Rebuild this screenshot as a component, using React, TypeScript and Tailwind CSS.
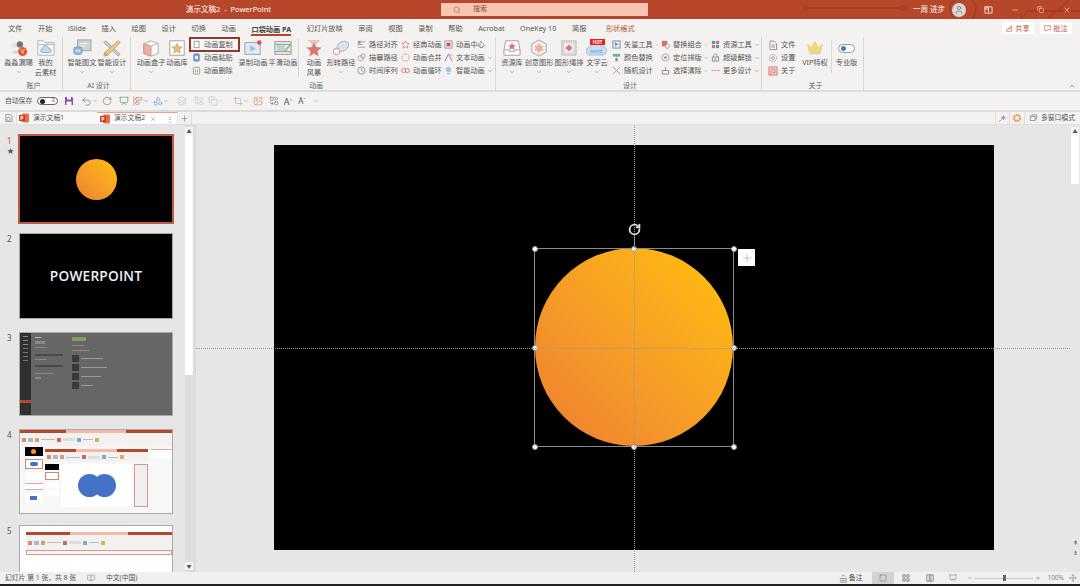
import React from 'react'
import { ChevronDown, ChevronUp, Undo2, RotateCw, Presentation, AlignStartVertical, Copy, Crop, Minus, Plus, X, Search, User, Square, Move, Layers, Combine, Shapes, ImagePlus, BookOpen } from 'lucide-react'

const tabs = ['文件', '开始', 'iSlide', '插入', '绘图', '设计', '切换', '动画']
const tabs2 = ['审阅', '视图', '录制', '帮助', 'Acrobat', 'OneKey 10', '简报']

function Ic({ children, w = 9, h = 9, vb = '0 0 10 10' }: { children: React.ReactNode; w?: number; h?: number; vb?: string }) {
  return (
    <svg width={w} height={h} viewBox={vb} fill="none" className="shrink-0 opacity-85">
      {children}
    </svg>
  )
}

function BigIcon({ children }: { children: React.ReactNode }) {
  return (
    <svg width="20" height="18" viewBox="0 0 22 20" fill="none" className="shrink-0 opacity-80">
      {children}
    </svg>
  )
}

function Big({ w, icon, label, line2, chev }: { w: string; icon: React.ReactNode; label: string; line2?: string; chev?: boolean }) {
  return (
    <div className={`${w} flex flex-col items-center pt-[2px] shrink-0`}>
      <div className="h-[18px] flex items-center justify-center">{icon}</div>
      <div className="h-[10px] leading-[10px] text-[7.2px] whitespace-nowrap">{label}</div>
      {line2 && <div className="h-[10px] leading-[10px] text-[7.2px] whitespace-nowrap">{line2}</div>}
      {chev && <ChevronDown size={6} strokeWidth={1.5} className="mt-[2px]" />}
    </div>
  )
}

function Small({ icon, label, chev }: { icon: React.ReactNode; label: string; chev?: boolean }) {
  return (
    <div className="h-[13px] flex items-center gap-[3px] whitespace-nowrap text-[7.2px] leading-none">
      {icon}
      <span>{label}</span>
      {chev && <ChevronDown size={6} strokeWidth={1.5} className="-ml-[1px]" />}
    </div>
  )
}

function List({ w, children }: { w: string; children: React.ReactNode }) {
  return <div className={`${w} shrink-0 flex flex-col pl-[3px] pt-[1px]`}>{children}</div>
}

function Group({ w, label, children }: { w: string; label: string; children: React.ReactNode }) {
  return (
    <div className={`${w} shrink-0 h-full flex flex-col border-r border-[#d8d6d4]`}>
      <div className="flex-1 flex">{children}</div>
      <div className="h-[9px] leading-[9px] text-center text-[7px] text-[#666]">{label}</div>
    </div>
  )
}

function Handle({ cls }: { cls: string }) {
  return <div className={`absolute w-[6px] h-[6px] rounded-full bg-white border border-[#999] ${cls}`} />
}

function PptIcon() {
  return (
    <svg width="10" height="10" viewBox="0 0 10 10" className="shrink-0">
      <rect x="3" y="0.5" width="7" height="9" rx="1" fill="#ed6c47" />
      <rect x="0" y="2" width="6" height="6" fill="#c43e1c" />
      <text x="1.2" y="7" fontSize="5" fontWeight="700" fill="#fff">P</text>
    </svg>
  )
}

function MiniRibbon({ body }: { body: string }) {
  return (
    <div className="flex flex-col shrink-0">
      <div className="h-[3px] bg-[#b7472a] flex justify-center">
        <div className="w-[40%] h-full bg-[#f5b9a5]" />
      </div>
      <div className={`${body} bg-[#f3f2f1] flex items-center gap-[2px] px-[2px]`}>
        <div className="w-[4px] h-[4px] bg-[#d98b6f]" />
        <div className="w-[5px] h-[4px] bg-[#a9b8cf]" />
        <div className="w-[4px] h-[4px] bg-[#cfa070]" />
        <div className="w-[14px] h-[1px] bg-[#bbb]" />
        <div className="w-[4px] h-[4px] bg-[#c96a5a]" />
        <div className="w-[12px] h-[3px] bg-[#ddd]" />
        <div className="w-[4px] h-[4px] bg-[#89a4c9]" />
        <div className="w-[10px] h-[1px] bg-[#bbb]" />
        <div className="w-[4px] h-[4px] bg-[#d8b25e]" />
      </div>
    </div>
  )
}

function Thumb3() {
  return (
    <div className="h-full flex bg-[#666]">
      <div className="w-[11px] bg-[#2f2f2f] flex flex-col items-center gap-[3px] pt-[3px]">
        <div className="w-[5px] h-[1px] bg-[#888]" />
        <div className="w-[5px] h-[1px] bg-[#888]" />
        <div className="w-[5px] h-[1px] bg-[#888]" />
        <div className="w-[5px] h-[1px] bg-[#777]" />
        <div className="w-[5px] h-[1px] bg-[#777]" />
        <div className="w-[5px] h-[1px] bg-[#777]" />
        <div className="w-[5px] h-[1px] bg-[#777]" />
        <div className="w-full h-[3px] bg-[#b7472a] mt-[36px]" />
      </div>
      <div className="flex-1 flex gap-[7px] pl-[4px] pt-[4px]">
        <div className="w-[30px] flex flex-col gap-[3px]">
          <div className="w-[6px] h-[1px] bg-[#bbb]" />
          <div className="w-[10px] h-[3px] bg-[#888]" />
          <div className="w-[12px] h-[1px] bg-[#888]" />
          <div className="w-[28px] h-[2px] bg-[#4a4a4a] mt-[3px]" />
          <div className="w-[12px] h-[1px] bg-[#888]" />
          <div className="w-[28px] h-[2px] bg-[#4a4a4a] mt-[2px]" />
          <div className="w-[18px] h-[1px] bg-[#888] mt-[3px]" />
          <div className="w-[6px] h-[2px] bg-[#888]" />
        </div>
        <div className="flex flex-col gap-[2px]">
          <div className="w-[14px] h-[4px] bg-[#8a9a5c]" />
          <div className="w-[12px] h-[1px] bg-[#888] mt-[2px]" />
          <div className="w-[18px] h-[1px] bg-[#a08a60] mt-[2px]" />
          <div className="flex gap-[2px] items-center mt-[2px]"><div className="w-[7px] h-[7px] bg-[#3a3a3a]" /><div className="w-[22px] h-[1px] bg-[#999]" /></div>
          <div className="flex gap-[2px] items-center"><div className="w-[7px] h-[7px] bg-[#3a3a3a]" /><div className="w-[26px] h-[1px] bg-[#999]" /></div>
          <div className="flex gap-[2px] items-center"><div className="w-[7px] h-[7px] bg-[#3a3a3a]" /><div className="w-[20px] h-[1px] bg-[#999]" /></div>
          <div className="flex gap-[2px] items-center"><div className="w-[7px] h-[7px] bg-[#3a3a3a]" /><div className="w-[12px] h-[1px] bg-[#999]" /></div>
        </div>
      </div>
    </div>
  )
}

function Thumb4() {
  return (
    <div className="h-full flex flex-col bg-[#f7f7f7]">
      <MiniRibbon body="h-[13px]" />
      <div className="flex-1 flex">
        <div className="w-[25px] shrink-0 flex flex-col items-center gap-[3px] pt-[1px] pl-[2px]">
          <div className="w-[18px] h-[9px] bg-black flex items-center justify-center"><div className="w-[5px] h-[5px] rounded-full bg-[#f59a1c]" /></div>
          <div className="w-[18px] h-[10px] bg-white border border-[#c98a78] flex items-center justify-center"><div className="w-[8px] h-[4px] rounded-full bg-[#4472c4]" /></div>
          <div className="w-[18px] h-[8px] bg-white" />
          <div className="w-[18px] h-[7px] bg-white border-y border-[#e0a99a]" />
          <div className="w-[18px] h-[10px] bg-white flex items-center justify-center"><div className="w-[7px] h-[4px] bg-[#4472c4]" /></div>
        </div>
        <div className="flex-1 flex flex-col pt-[3px] pb-[6px]">
          <MiniRibbon body="h-[10px]" />
          <div className="flex-1 flex gap-[2px] pt-[2px]">
            <div className="w-[14px] shrink-0 flex flex-col gap-[2px]">
              <div className="h-[6px] bg-black" />
              <div className="h-[8px] bg-white border border-[#c98a78]" />
              <div className="h-[6px] bg-white" />
              <div className="h-[6px] bg-white" />
            </div>
            <div className="flex-1 bg-white flex items-center justify-center">
              <div className="w-[23px] h-[23px] rounded-full bg-[#4472c4]" />
              <div className="w-[23px] h-[23px] rounded-full bg-[#4472c4] -ml-[8px]" />
            </div>
            <div className="w-[14px] shrink-0 bg-[#f0f0f0] border border-[#d39b8a]" />
          </div>
        </div>
        <div className="w-[24px] shrink-0 pl-[3px] pt-[3px]">
          <div className="h-[10px] bg-white border-t border-[#e0a99a]" />
        </div>
      </div>
    </div>
  )
}

function Thumb5() {
  return (
    <div className="h-full bg-white pl-[6px] pt-[6px]">
      <MiniRibbon body="h-[15px]" />
      <div className="h-[5px] border border-[#d39b8a] bg-[#f5f5f5]" />
    </div>
  )
}

function Slide({ n, active, h, mt, children }: { n: number; active?: boolean; h: string; mt: string; children: React.ReactNode }) {
  return (
    <div className={`flex shrink-0 ${mt}`}>
      <div className="w-[20px] pl-[7px] flex flex-col text-[8px] leading-[10px]">
        <span className={active ? 'text-[#c0593f]' : 'text-[#555]'}>{n}</span>
        {active && <span className="text-[7px] text-[#555]">★</span>}
      </div>
      <div className={`w-[152px] ${h} shrink-0 overflow-hidden ${active ? 'outline-2 outline-[#c4593f]' : 'outline-1 outline-[#aaa]'}`}>{children}</div>
    </div>
  )
}

export default function App() {
  return (
    <div className="w-[1080px] h-[586px] overflow-hidden flex flex-col bg-[#e6e6e6] text-[#555] font-['Noto_Sans','Noto_Sans_CJK_SC',sans-serif]">
      {/* title bar */}
      <div className="relative h-[19px] shrink-0 bg-[#b7472a] flex items-center text-white text-[7.5px]">
        <svg width="277" height="19" viewBox="0 0 277 19" fill="none" className="absolute right-0 top-0" stroke="#a33d23" strokeWidth="1.5">
          <path d="M2 8h98" />
          <circle cx="2" cy="8" r="2" />
          <circle cx="100" cy="8" r="2" />
          <circle cx="160" cy="9" r="13" />
          <path d="M217 19l8-8h30l11-11M245 19l8-8h24" />
        </svg>
        <div className="w-[441px] pl-[186px] whitespace-nowrap">演示文稿2&nbsp;&nbsp;-&nbsp;&nbsp;PowerPoint</div>
        <div className="w-[207px] h-[13px] bg-[#fbc5b2] flex items-center pl-[12px] gap-[12px] text-[#8f4a35] text-[7px]">
          <Search size={8} strokeWidth={1.5} />
          <span>搜索</span>
        </div>
        <div className="ml-auto relative flex items-center">
          <span className="mr-[7px]">一周 进步</span>
          <div className="w-[14px] h-[14px] rounded-full bg-[#d9d9d9] flex items-center justify-center mr-[18px]"><User size={10} color="#666" strokeWidth={1.5} /></div>
          <Ic w={9} h={8} vb="0 0 10 9"><path d="M1 1h8v7H1zM5 1v7M1 1h4v2.500H1z" stroke="#fff" /></Ic>
          <Minus size={8} className="ml-[18px]" strokeWidth={1.5} />
          <Copy size={7} className="ml-[18px]" strokeWidth={1.5} />
          <X size={8} className="ml-[19px] mr-[9px]" strokeWidth={1.5} />
        </div>
      </div>

      {/* tabs */}
      <div className="h-[18px] shrink-0 bg-[#f3f2f1] flex items-center pl-[8px] gap-[15.6px] text-[7.2px]">
        {tabs.map((t) => <span key={t}>{t}</span>)}
        <span className="font-bold text-[#444] border-b-2 border-[#b7472a] h-[16px] leading-[17px] pt-[1px]">口袋动画 PA</span>
        <span>幻灯片放映</span>
        {tabs2.map((t) => <span key={t}>{t}</span>)}
        <span className="text-[#c0543a] ml-[4px]">形状格式</span>
        <div className="ml-auto flex gap-[6px] pr-[8px]">
          <div className="w-[32px] h-[12px] bg-white flex items-center justify-center gap-[2px] text-[#c0543a]"><Ic w={7} h={7}><path d="M1 5v4h7V6M3 6c0-2 2-3 4-3V1l2 3-2 2V5C5 5 4 5 3 6z" stroke="#c0543a" /></Ic>共享</div>
          <div className="w-[32px] h-[12px] bg-white flex items-center justify-center gap-[2px] text-[#c0543a]"><Ic w={7} h={7}><path d="M1 1h8v6H4L2 9V7H1z" stroke="#c0543a" /></Ic>批注</div>
        </div>
      </div>

      {/* ribbon */}
      <div className="relative h-[53px] shrink-0 bg-[#f3f2f1] flex">
        <Group w="w-[63px] pl-[5px]" label="账户">
          <Big w="w-[27px]" label="淼淼漏陽" chev icon={<BigIcon><circle cx="6" cy="7" r="3" fill="#e4e4e4" /><circle cx="12" cy="6" r="3.500" fill="#555" /><path d="M3 16c1-5 11-5 13 0z" fill="#d5d5d5" /><circle cx="15" cy="14" r="5" fill="#d92b1f" /><path d="M13 11l2 5 2-5" stroke="#fc0" strokeWidth="1.2" /></BigIcon>} />
          <Big w="w-[27px]" label="我的" line2="云素材" icon={<BigIcon><path d="M2 2h6l2 2h10v14H2z" fill="#fff" stroke="#9a9a9a" /><path d="M2 6h18" stroke="#9a9a9a" /><path d="M7 15a2 2 0 0 1 0-4 3.500 3.500 0 0 1 7-.5A2.300 2.300 0 0 1 15 15z" fill="#b9d5ee" stroke="#5b9bd5" /></BigIcon>} />
        </Group>
        <Group w="w-[68px] pl-[4px]" label="AI 设计">
          <Big w="w-[30px]" label="智能图文" chev icon={<BigIcon><rect x="6" y="1" width="15" height="12" fill="#c9c9c9" stroke="#888" /><path d="M9 5h9M9 8h6" stroke="#fff" /><rect x="2" y="9" width="9" height="8" rx="2" fill="#7fb0dd" stroke="#4a7fb0" /><circle cx="5" cy="13" r="1" fill="#fff" /><circle cx="8" cy="13" r="1" fill="#fff" /></BigIcon>} />
          <Big w="w-[30px]" label="智能设计" chev icon={<BigIcon><path d="M4 2l16 15-2 2L2 4z" fill="#c9c9c9" stroke="#888" /><path d="M18 2l2 2L6 18l-4 1 1-4z" fill="#e8c070" stroke="#b5863a" /><path d="M3 15l3 3" stroke="#d35" /></BigIcon>} />
        </Group>
        <Group w="w-[365px] pl-[6px]" label="动画">
          <Big w="w-[28px]" label="动画盒子" chev icon={<BigIcon><path d="M11 2l8 3v11l-8 3-8-3V5z" fill="#fff" stroke="#999" /><path d="M3 5l8 3v11l-8-3z" fill="#e8a090" stroke="#c76" /><path d="M11 8l8-3" stroke="#999" /></BigIcon>} />
          <Big w="w-[24px]" label="动画库" icon={<BigIcon><rect x="3" y="2" width="16" height="16" fill="#fff" stroke="#888" /><path d="M11 5l1.700 3.500 3.800.5-2.800 2.600.7 3.800L11 13.500l-3.400 1.900.7-3.800L5.500 9l3.800-.5z" fill="#e9b44c" stroke="#c05a3a" strokeWidth=".6" /></BigIcon>} />
          <div className="w-[49px] shrink-0 flex flex-col">
            <div className="h-[15px] w-[51px] border-[2.5px] border-[#8f3a2a] bg-[#f8f8f8] flex items-center gap-[3px] pl-[2px] text-[7.2px] leading-none whitespace-nowrap">
              <Ic w={8} h={9}><rect x="1.500" y="1" width="6" height="8" fill="#fff" stroke="#777" /></Ic>
              <span>动画复制</span>
            </div>
            <div className="pl-[3px] -mt-[1px]">
              <Small label="动画粘贴" icon={<Ic><rect x="2" y="1" width="6" height="8" rx="1" fill="#6c9bd2" stroke="#3f6fa8" /><rect x="3.500" y="3.500" width="3" height="3" fill="#fff" /></Ic>} />
              <Small label="动画删除" icon={<Ic><rect x="1.500" y="1.500" width="7" height="7.500" rx="1" stroke="#888" /><path d="M4 4v3M6 4v3" stroke="#888" /></Ic>} />
            </div>
          </div>
          <Big w="w-[30px]" label="录制动画" icon={<BigIcon><rect x="2" y="4" width="17" height="13" fill="#dbe9f5" stroke="#8a8a8a" /><path d="M8 7l6 3.500-6 3.500z" fill="#7fb0dd" /><circle cx="18" cy="4" r="2.500" fill="#e02020" /></BigIcon>} />
          <Big w="w-[30px]" label="平滑动画" icon={<BigIcon><rect x="2" y="3" width="18" height="14" fill="#eee" stroke="#777" /><path d="M2 6h18M2 14h18" stroke="#777" /><rect x="4" y="7" width="9" height="6" fill="#9ed3c5" /><path d="M12 13l6-7 2 1-6 7-2 .5z" fill="#8bb04d" /></BigIcon>} />
          <div className="w-[1px] h-[38px] bg-[#d8d6d4] mt-[2px] mr-[1px]" />
          <Big w="w-[28px]" label="动画" line2="风暴" icon={<BigIcon><path d="M4 1h14L11 8z" fill="#f2b7ae" /><path d="M11 4l2.300 5 5.700.7-4.200 3.800 1.100 5.500L11 16.200 6.100 19l1.100-5.500L3 9.700 8.700 9z" fill="#d9574a" stroke="#999" strokeWidth=".5" /></BigIcon>} />
          <Big w="w-[26px]" label="形转路径" chev icon={<BigIcon><ellipse cx="13" cy="8" rx="7" ry="5" transform="rotate(-30 13 8)" fill="#cfe0f2" stroke="#9ab" /><circle cx="6" cy="14" r="3.500" fill="#fff" stroke="#e4574c" /></BigIcon>} />
          <List w="w-[44px]">
            <Small label="路径对齐" icon={<Ic><path d="M1 2h8M1 5h5M1 8h8" stroke="#888" /><rect x="1" y="1" width="3" height="3" fill="#e4574c" /></Ic>} />
            <Small label="描摹路径" icon={<Ic><circle cx="4" cy="6" r="3" stroke="#e58a5a" /><circle cx="6.500" cy="3.500" r="2.500" stroke="#6c9bd2" /></Ic>} />
            <Small label="时间序列" icon={<Ic><circle cx="5" cy="5" r="4" stroke="#6b7f99" /><path d="M5 2.500V5l2 1" stroke="#6b7f99" /></Ic>} />
          </List>
          <List w="w-[43px]">
            <Small label="经典动画" icon={<Ic><path d="M5 1l1.200 2.700 2.800.3-2 2 .6 3L5 7.500 2.400 9 3 6 1 4l2.800-.3z" stroke="#d9574a" fill="#fff" strokeWidth=".8" /></Ic>} />
            <Small label="动画合并" icon={<Ic><path d="M5 1a4 4 0 0 1 4 4" stroke="#6c9bd2" strokeDasharray="1.500 1" /><path d="M9 5a4 4 0 1 1-4-4" stroke="#e4574c" strokeDasharray="1.500 1" /></Ic>} />
            <Small label="动画循环" icon={<Ic><circle cx="3" cy="5" r="2.300" stroke="#e4574c" /><circle cx="7" cy="5" r="2.300" stroke="#e4574c" /></Ic>} />
          </List>
          <List w="w-[54px]">
            <Small label="动画中心" icon={<Ic><rect x="1" y="1" width="8" height="8" stroke="#888" /><rect x="3" y="3" width="4" height="4" fill="#e02020" /></Ic>} />
            <Small label="文本动画" chev icon={<Ic><path d="M1 9l4-8 4 8" stroke="#8a5ab5" /><circle cx="8" cy="2" r="1" fill="#e8a040" /></Ic>} />
            <Small label="智能动画" chev icon={<Ic><circle cx="5" cy="4" r="3" fill="#8ec1ea" /><path d="M3.500 8.500h3" stroke="#5b9bd5" /></Ic>} />
          </List>
        </Group>
        <Group w="w-[266px] pl-[3px]" label="设计">
          <Big w="w-[26px]" label="资源库" chev icon={<BigIcon><path d="M4 2h14l2 10v6H2v-6z" fill="#fff" stroke="#888" /><path d="M2 12h6v2h6v-2h6" stroke="#888" /><path d="M11 4l1.300 2.700 2.900.3-2.100 2 .6 2.900L11 10.500 8.300 12l.6-2.900-2.100-2 2.900-.3z" fill="#d9574a" /></BigIcon>} />
          <Big w="w-[28px]" label="创意图形" chev icon={<BigIcon><path d="M11 1l8 4.500v9L11 19l-8-4.500v-9z" fill="#f4f4f4" stroke="#888" /><path d="M11 4l2 3.500h3.500L14.500 10l2 3h-3.500L11 16.500 9 13H5.500l2-3-2-2.500H9z" fill="#eea47f" /></BigIcon>} />
          <Big w="w-[32px]" label="图形绳排" chev icon={<BigIcon><rect x="3" y="2" width="16" height="16" fill="#d5d5d5" stroke="#999" strokeDasharray="1.500 1" /><rect x="6" y="5" width="10" height="10" fill="#f4f4f4" /><path d="M11 6l4 4-4 4-4-4z" fill="#e4574c" /></BigIcon>} />
          <Big w="w-[24px]" label="文字云" chev icon={
            <div className="relative w-[22px] h-[18px]">
              <svg width="22" height="18" viewBox="0 0 22 18" fill="none"><path d="M5 16a4 4 0 0 1-1-8 6 6 0 0 1 11-1 4.500 4.500 0 0 1 2 9z" fill="#c6ddf2" stroke="#9cc0e0" /></svg>
              <span className="absolute left-[4px] top-0 w-[15px] h-[6px] bg-[#ee1c1c] text-white text-[4.5px] leading-[6px] text-center font-bold">HOT</span>
              <span className="absolute left-[4px] top-[9px] text-[5px] leading-[6px] text-[#5b9bd5]">word</span>
            </div>
          } />
          <List w="w-[49px]">
            <Small label="矢量工具" chev icon={<Ic><rect x="1" y="1" width="8" height="8" fill="#dfeaf5" stroke="#777" /><path d="M3 2l4 3-2 .5L4 8z" fill="#2e86c9" /></Ic>} />
            <Small label="颜色替换" icon={<Ic><rect x="1" y="1" width="8" height="3" fill="#4caf7d" /><path d="M5 4v2M4 6h2v3H4z" fill="#777" stroke="#777" strokeWidth=".6" /></Ic>} />
            <Small label="随机设计" icon={<Ic><path d="M1 9l8-8" stroke="#999" /><path d="M1 1l8 8" stroke="#d9574a" /></Ic>} />
          </List>
          <List w="w-[50px]">
            <Small label="替换组合" chev icon={<Ic><rect x="1" y="1" width="6" height="6" fill="#d9574a" /><circle cx="7" cy="7" r="2.200" stroke="#888" fill="#fff" /></Ic>} />
            <Small label="定位排版" chev icon={<Ic><circle cx="5" cy="5" r="4" stroke="#999" /><circle cx="5" cy="5" r="1.500" fill="#e4574c" /></Ic>} />
            <Small label="选择清除" chev icon={<Ic><path d="M1.500 9V5h7v4zM5 5V1" stroke="#777" /></Ic>} />
          </List>
          <List w="w-[52px]">
            <Small label="资源工具" chev icon={<Ic><rect x="1" y="1" width="3.500" height="3.500" fill="#3f7fc4" /><rect x="5.500" y="1" width="3.500" height="3.500" fill="#d9574a" /><rect x="1" y="5.500" width="3.500" height="3.500" fill="#d9574a" /><rect x="5.500" y="5.500" width="3.500" height="3.500" fill="#3f7fc4" /></Ic>} />
            <Small label="超级解锁" chev icon={<Ic><rect x="1.500" y="4.500" width="7" height="4.500" stroke="#777" /><rect x="4" y="6" width="2" height="2" fill="#4caf7d" /><path d="M3 4.500V3a2 2 0 0 1 4 0v1.500" stroke="#888" /></Ic>} />
            <Small label="更多设计" chev icon={<Ic><path d="M0.500 5h2M4 5h2M7.500 5h2" stroke="#d9574a" /></Ic>} />
          </List>
        </Group>
        <Group w="w-[102px] pl-[6px]" label="关于">
          <List w="w-[32px] -ml-[3px]">
            <Small label="文件" chev icon={<Ic w={10} h={10}><path d="M2 1h4l2.500 2.500V9.500H2z" stroke="#888" /><path d="M3.500 5h3.500M3.500 7h3.500" stroke="#888" /></Ic>} />
            <Small label="设置" chev icon={<Ic w={10} h={10}><circle cx="5" cy="5" r="3.500" stroke="#999" strokeDasharray="1.500 .6" /><circle cx="5" cy="5" r="1.300" stroke="#999" /></Ic>} />
            <Small label="关于" chev icon={<Ic w={10} h={10}><rect x="1" y="1" width="8" height="8" stroke="#d9574a" /><path d="M3 9V3h4v4H5V5" stroke="#d9574a" /></Ic>} />
          </List>
          <Big w="w-[32px] ml-[2px]" label="VIP特权" icon={<BigIcon><path d="M3 6l4 4 4-7 4 7 4-4-2 9H5z" fill="#f7d154" stroke="#e0b030" strokeWidth=".6" /><path d="M5 15h12v2H5z" fill="#c9c9c9" /></BigIcon>} />
          <div className="w-[1px] h-[33px] bg-[#d8d6d4] mt-[3px]" />
          <Big w="w-[29px]" label="专业版" icon={<div className="w-[17px] h-[9px] rounded-full border border-[#999] bg-white flex items-center pl-[2px]"><div className="w-[5px] h-[5px] rounded-full bg-[#3f7fc4]" /></div>} />
        </Group>
        <ChevronUp size={8} strokeWidth={1.5} className="absolute right-[4px] bottom-[0px]" />
      </div>
      <div className="h-[2px] shrink-0 bg-[#dcdcdc]" />

      {/* quick access */}
      <div className="h-[18px] shrink-0 bg-[#f3f2f1] flex items-center pl-[5px] text-[#555]">
        <span className="text-[6.8px] whitespace-nowrap">自动保存</span>
        <div className="ml-[5px] w-[21px] h-[8px] rounded-full border border-[#666] bg-white flex items-center justify-between px-[2px]">
          <div className="w-[5px] h-[5px] rounded-full bg-[#222]" />
          <span className="text-[4px] leading-none">关</span>
        </div>
        <svg width="10" height="10" viewBox="0 0 10 10" className="ml-[6px] shrink-0"><path d="M1 1h7l1 1v7H1z" fill="#8e44ad" /><rect x="3" y="1" width="4" height="2.500" fill="#fff" /><rect x="2.500" y="5.500" width="5" height="3.500" fill="#fff" /></svg>
        <Undo2 size={11} strokeWidth={1.2} className="ml-[6.5px]" />
        <ChevronDown size={6} strokeWidth={1.2} />
        <RotateCw size={10} strokeWidth={1.2} className="ml-[4px]" />
        <Presentation size={10} strokeWidth={1.2} color="#2f7d4f" className="ml-[7px]" />
        <AlignStartVertical size={10} strokeWidth={1.2} color="#b7472a" className="ml-[4px]" />
        <ChevronDown size={6} strokeWidth={1.2} />
        <Shapes size={10} strokeWidth={1.2} color="#2e86c9" className="ml-[4px]" />
        <ChevronDown size={6} strokeWidth={1.2} />
        <Layers size={10} strokeWidth={1.2} color="#b5b5b5" className="ml-[8px]" />
        <Combine size={10} strokeWidth={1.2} color="#b5b5b5" className="ml-[7px]" />
        <Copy size={10} strokeWidth={1.2} color="#b5b5b5" className="ml-[4px]" />
        <ChevronDown size={6} strokeWidth={1.2} color="#b5b5b5" />
        <Crop size={10} strokeWidth={1.2} color="#999" className="ml-[9px]" />
        <ChevronDown size={6} strokeWidth={1.2} />
        <ImagePlus size={10} strokeWidth={1.2} color="#c77a2a" className="ml-[4px]" />
        <Combine size={10} strokeWidth={1.2} className="ml-[6px]" />
        <span className="ml-[5px] text-[9px] leading-none">A<sup className="text-[5px] text-[#2e86c9]">^</sup></span>
        <span className="ml-[6px] text-[8px] leading-none">A<sup className="text-[5px] text-[#2e86c9]">ˇ</sup></span>
        <ChevronDown size={6} strokeWidth={1.2} className="ml-[7px]" />
      </div>
      <div className="h-[2px] shrink-0 bg-[#dcdcdc]" />

      {/* document tabs */}
      <div className="h-[13px] shrink-0 bg-[#f3f2f1] flex items-stretch text-[6.8px] whitespace-nowrap border-b border-[#dedede]">
        <div className="w-[17px] flex items-center justify-center border-r border-[#dedede]"><Ic w={9} h={10}><path d="M2 1h5l2 2v6H2z" stroke="#888" /><circle cx="5" cy="6" r="2" stroke="#888" /></Ic></div>
        <div className="w-[80px] flex items-center gap-[4px] pl-[2px] bg-[#f8f8f8]"><PptIcon /><span>演示文稿1</span></div>
        <div className="w-[80px] flex items-center gap-[4px] pl-[3px] bg-white border-t border-[#e8a48d]">
          <PptIcon /><span>演示文稿2</span>
          <X size={8} strokeWidth={1} className="ml-auto" />
          <span className="mr-[3px] ml-[5px] text-[8px]">⋮</span>
        </div>
        <div className="w-[15px] flex items-center justify-center border-x border-[#dedede]"><Plus size={9} strokeWidth={1.2} /></div>
        <div className="ml-auto flex items-center">
          <div className="w-[15px] h-full flex items-center justify-center border-x border-[#dedede]"><Ic w={9} h={9}><path d="M1 9l4-4" stroke="#888" /><path d="M6 1l1 2 2 1-2 1-1 2-1-2-2-1 2-1z" fill="#9b6fc4" /></Ic></div>
          <div className="w-[15px] h-full flex items-center justify-center border-r border-[#dedede]"><Ic w={10} h={10}><circle cx="5" cy="5" r="3" stroke="#ef8a2e" strokeWidth="2" strokeDasharray="2 .5" /></Ic></div>
          <div className="w-[55px] flex items-center gap-[3px] pl-[4px]"><Ic w={9} h={8}><rect x="1" y="3" width="6" height="5" stroke="#777" /><path d="M3 3V1h6v5H7" stroke="#777" /></Ic>多窗口模式</div>
        </div>
      </div>

      {/* workspace */}
      <div className="h-[447px] shrink-0 flex">
        <div className="w-[196px] shrink-0 flex border-r-[3px] border-[#dcdcdc]">
          <div className="w-[185px] overflow-hidden flex flex-col">
            <Slide n={1} active mt="mt-[11px]" h="h-[86px]">
              <div className="h-full bg-black flex items-center justify-center">
                <div className="w-[41px] h-[41px] rounded-full bg-gradient-to-tr from-[#ed7d31] to-[#ffc000]" />
              </div>
            </Slide>
            <Slide n={2} mt="mt-[12px]" h="h-[84px]">
              <div className="h-full bg-black flex items-center justify-center text-[#eef2f5] text-[13.7px] font-semibold tracking-[0.2px] font-['Open_Sans',sans-serif]">POWERPOINT</div>
            </Slide>
            <Slide n={3} mt="mt-[15px]" h="h-[82px]"><Thumb3 /></Slide>
            <Slide n={4} mt="mt-[15px]" h="h-[83px]"><Thumb4 /></Slide>
            <Slide n={5} mt="mt-[13px]" h="h-[84px]"><Thumb5 /></Slide>
          </div>
          <div className="w-[8px] shrink-0 flex flex-col bg-[#dcdcdc] py-[2px]">
            <div className="h-[8px] bg-[#f4f4f4] flex items-center justify-center text-[5px] leading-none">▲</div>
            <div className="h-[240px] bg-white" />
            <div className="flex-1" />
            <div className="h-[8px] bg-[#f4f4f4] flex items-center justify-center text-[5px] leading-none">▼</div>
          </div>
        </div>

        <div className="relative flex-1 flex overflow-hidden">
          <div className="flex-1">
            <div className="relative ml-[78px] mt-[20px] w-[720px] h-[405px] bg-black">
              <div className="absolute left-[261px] top-[103px] w-[198px] h-[198px] rounded-full bg-gradient-to-tr from-[#ed7d31] to-[#ffc000]" />
              <div className="absolute left-[260px] top-[103px] w-[200px] h-[199px] border border-[#8a8a8a]">
                <Handle cls="-left-[3.5px] -top-[3.5px]" />
                <Handle cls="left-[96px] -top-[3.5px]" />
                <Handle cls="-right-[3.5px] -top-[3.5px]" />
                <Handle cls="-left-[3.5px] top-[96px]" />
                <Handle cls="-right-[3.5px] top-[96px]" />
                <Handle cls="-left-[3.5px] -bottom-[3.5px]" />
                <Handle cls="left-[96px] -bottom-[3.5px]" />
                <Handle cls="-right-[3.5px] -bottom-[3.5px]" />
                <div className="absolute left-[99px] -top-[15px] w-[1px] h-[14px] bg-[#8a8a8a]" />
                <div className="absolute left-[93px] -top-[26px]">
                  <RotateCw size={13} strokeWidth={3.5} color="#d8d8d8" />
                </div>
                <div className="absolute -right-[22px] top-0 w-[17px] h-[17px] bg-white flex items-center justify-center">
                  <Plus size={12} strokeWidth={1} color="#888" />
                </div>
              </div>
            </div>
          </div>
          {/* guides */}
          <div className="absolute left-0 right-[10px] top-[223px] border-t border-dotted border-[#9a9a9a]" />
          <div className="absolute left-[438px] top-0 bottom-0 border-l border-dotted border-[#9a9a9a]" />
          <div className="w-[9px] shrink-0 flex flex-col py-[2px] pr-[1px]">
            <div className="h-[9px] bg-[#f4f4f4] flex items-center justify-center text-[5px] leading-none">▲</div>
            <div className="h-[48px] bg-white" />
            <div className="flex-1" />
            <div className="h-[10px] text-[6px] leading-[10px] text-center">⇞</div>
            <div className="h-[10px] mb-[12px] text-[6px] leading-[10px] text-center">⇟</div>
          </div>
        </div>
      </div>

      {/* status bar */}
      <div className="h-[12px] shrink-0 bg-[#f0f0f0] flex items-center text-[6.8px] pl-[5px] whitespace-nowrap">
        <span>幻灯片 第 1 张，共 8 张</span>
        <BookOpen size={8} strokeWidth={1.2} className="ml-[11px]" />
        <span className="ml-[11px]">中文(中国)</span>
        <div className="ml-auto flex items-center h-full">
          <Ic w={9} h={9}><path d="M1 5h8M1 7h8M1 9h8M3 3l2-2 2 2" stroke="#666" strokeWidth=".8" /></Ic>
          <span className="mr-[10px] ml-[1px]">备注</span>
          <div className="w-[22px] h-full bg-[#d2d2d2] flex items-center justify-center"><Square size={8} strokeWidth={1.2} /></div>
          <div className="w-[24px] flex justify-center"><Ic w={8} h={8}><path d="M1 1h3v3H1zM6 1h3v3H6zM1 6h3v3H1zM6 6h3v3H6z" stroke="#666" /></Ic></div>
          <div className="w-[23px] flex justify-center"><Ic w={8} h={8}><path d="M1 1h8v8H1zM4 1v8M6 1v8" stroke="#666" /></Ic></div>
          <div className="w-[24px] flex justify-center"><Presentation size={8} strokeWidth={1.2} /></div>
          <Minus size={6} strokeWidth={1.2} className="ml-[2px]" />
          <div className="relative w-[58px] h-[1px] bg-[#c8c8c8] ml-[2px] flex justify-center">
            <div className="w-[3px] h-[6px] -mt-[3px] bg-[#666]" />
          </div>
          <Plus size={6} strokeWidth={1.2} className="ml-[2px]" />
          <span className="ml-[6px] text-[6.5px] text-[#888]">100%</span>
          <Move size={8} strokeWidth={1.2} className="ml-[5px] mr-[3px]" />
        </div>
      </div>
      <div className="h-[2px] shrink-0 bg-[#222]" />
    </div>
  )
}
